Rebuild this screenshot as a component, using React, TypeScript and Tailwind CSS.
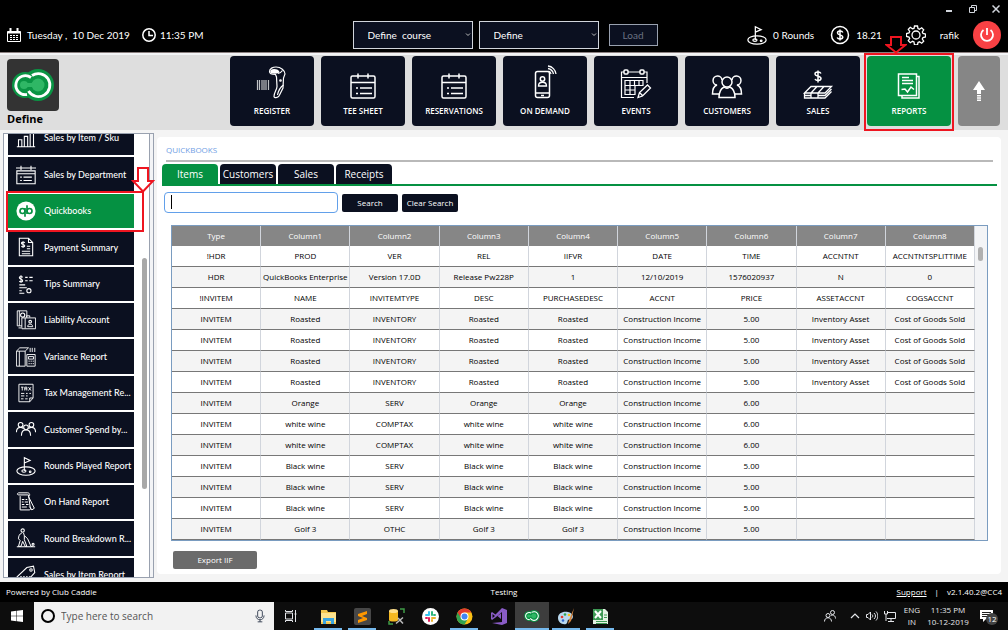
import type { ReactNode } from "react";
import clsx from "clsx";

const Svg = ({ className, box = 24, width = 1.5, children }: { className: string; box?: number; width?: number; children: ReactNode }) => (
  <svg
    className={clsx("shrink-0", className)}
    viewBox={`0 0 ${box} ${box}`}
    fill="none"
    stroke="currentColor"
    strokeWidth={width}
    aria-hidden="true"
  >
    {children}
  </svg>
);

const ClubLogo = ({ className }: { className: string }) => (
  <svg className={clsx("shrink-0", className)} viewBox="0 0 42 32" fill="none" aria-hidden="true">
    <circle cx="13" cy="16" r="13" fill="#0a9444" />
    <circle cx="26" cy="16" r="16" fill="#0a9444" />
    <circle cx="12" cy="16" r="4" fill="#2fb765" />
    <circle cx="26" cy="16" r="6.5" fill="#2fb765" />
    <path d="M12 14h10v4H12z" fill="#2fb765" />
    <path d="M19 8.500A9.500 9.500 0 1 0 15 25.500" stroke="#fff" strokeWidth="2.800" />
    <path d="M20 6.500A11.500 11.500 0 1 1 16.500 22" stroke="#fff" strokeWidth="2.800" />
  </svg>
);

const calendarList = (
  <>
    <rect x="4" y="8" width="24" height="22" rx="1.500" />
    <path d="M4 14.500h24M11 5.500v5M21 5.500v5M13 20h12M13 25.500h12M9 20h2M9 25.500h2" />
  </>
);

const navItems = [
  {
    label: "REGISTER",
    icon: (
      <>
        <path d="M1.500 12v10M3.500 12v10M6 12v10M8 12v10M10 12v10M12.500 12v10" strokeWidth="1.200" opacity=".75" />
        <path d="M13.500 3.500C13.500.5 17-1 20-1c5 0 9 3.500 9 7l-1.500 4-.5 10-4 8c-1 2-5 2-5 .5 0-4 3-7 3-10L20.500 9l-1-2.500c-3 0-6-.5-6-3z" strokeWidth="1.200" />
        <path d="M15 3.500c0-2.500 6-2.500 7.500 0 0 2-7.500 2-7.500 0z" fill="currentColor" />
        <path d="M22 5.500c2-.5 3.500-1.500 4.500-3M27.500 17c-3 2-5 5-6 10" strokeWidth="1.200" />
        <circle cx="24.500" cy="12.500" r=".6" />
      </>
    ),
  },
  { label: "TEE SHEET", icon: calendarList },
  { label: "RESERVATIONS", icon: calendarList },
  {
    label: "ON DEMAND",
    icon: (
      <>
        <rect x="6.500" y="3.500" width="14" height="26" rx="2" />
        <path d="M6.500 25h14M12 27.500h3M9.500 18c0-5 8-5 8 0zM19.500 3a4 4 0 0 1 2.500 3M19 .5a7 7 0 0 1 5.500 5.500M19-2a9 9 0 0 1 8 8" strokeWidth="1.300" />
        <circle cx="13.500" cy="11" r="2.200" />
      </>
    ),
  },
  {
    label: "EVENTS",
    icon: (
      <>
        <path d="M4 4H1.500v25.500H14M8 4h12M24 4h3v11M1.500 9.500H27M5 12.500h18v5H5zM5 17.500h10v9H5zM5 22h10M10 12.500v14M14.500 12.500v5M19 12.500v5" strokeWidth="1.200" />
        <rect x="4" y="2" width="4" height="4" rx="1" />
        <rect x="20" y="2" width="4" height="4" rx="1" />
        <path d="M18 29.500l1.500-5 8-7.500 3 3-8 8zM19.500 24.500l3 3" strokeWidth="1.300" />
      </>
    ),
  },
  {
    label: "CUSTOMERS",
    icon: (
      <>
        <circle cx="16" cy="14" r="5" />
        <path d="M8 29.500c0-6 2-9 5-10.500 2 1.500 4 1.500 6 0 3 1.500 5 4.500 5 10.500z" />
        <path d="M11 12a4.500 4.500 0 1 0-5 5c-3 1-4.500 4-4.500 9H8M21 12a4.500 4.500 0 1 1 5 5c3 1 4.500 4 4.500 9H24" />
      </>
    ),
  },
  {
    label: "SALES",
    icon: (
      <>
        <path d="M19 5.500c-1-2-6-2-6 .5s6 2 6 4.500-5 2.500-6 .5M16 2.500v12" />
        <path d="M2.500 25L9 18.500h20.500L23 25zM2.500 25v5H23l6.500-6.500M2.500 27.500h6M16 27.500h7l6.500-6.500M9 25l6-6.500M16 25l6-6.500M9 25v5M16 25v5" strokeWidth="1.300" />
      </>
    ),
  },
  {
    label: "REPORTS",
    icon: (
      <>
        <path d="M5.500 6h18v21.500h-18zM23.500 8.500H26V30H9v-2.500" />
        <path d="M9 9.500h7M9 12.500h11M9 15.500h11M8.500 21.500l3.500-.5 2.500 3 3.500-5 3 2.500" />
      </>
    ),
  },
];

const golf = (
  <>
    <ellipse cx="12" cy="18" rx="11" ry="5" />
    <path d="M10 18V2l7 3.500-7 3" />
    <ellipse cx="9.500" cy="18" rx="2.500" ry="1.500" />
    <circle cx="17" cy="19" r="1" />
  </>
);

const reports = [
  { label: "Sales by Item / Sku", icon: <path d="M1 22.500h22M3 22V14h4v8M10 22V10h4v12M17 22V5h4v17" /> },
  {
    label: "Sales by Department",
    icon: <path d="M0 3.500h24M1 7h22v15.500H1zM1 10.500h22M6 1v5M18 1v5M9 14.500h10M9 18.500h10M5 14.500h2M5 18.500h2" />,
  },
  { label: "Quickbooks", icon: null },
  {
    label: "Payment Summary",
    icon: <path d="M4 1.500h11l5 5v16H4zM15 1.500v5h5M10.500 7c-1-1.500-4-1-4 .5s4 1.500 4 3-3 2-4 .5M8.500 5v8M13 11h4M13 14h4M7 17h10M7 20h10" />,
  },
  {
    label: "Tips Summary",
    icon: (
      <>
        <path d="M8 4C7 2.500 4 2.500 4 4.500S8 6 8 8s-3 2-4 .5M6 1.500v9M11 4h3M16 4h4M11 8h3M16 8h4M4 13h7M4 16.500h9M4 20h3M4 23h6" />
        <circle cx="15.500" cy="20" r="2.500" />
      </>
    ),
  },
  {
    label: "Liability Account",
    icon: (
      <>
        <path d="M7 19H1.500V1H13v8M4 1v18M3 21.500h3M7 9.500h16.500v13H7zM11 9.500V22M12.500 9V7h4v2M14 20c0-4 6-4 6 0z" strokeWidth="1.100" />
        <circle cx="8" cy="6" r="2.500" />
        <circle cx="17" cy="14" r="1.600" />
      </>
    ),
  },
  {
    label: "Variance Report",
    icon: <path d="M.5 5v18H11V5zM.5 5l4-4H15M4 5v18M11 5l4-4M13 9h10v14H13zM17 1v5M19.500 1v5M22.500 1v5M15 11.500h6v3h-6zM15 17h1.500M17.500 17H19M20 17h1.500M15 20h1.500M17.500 20H19M20 20h1.500" strokeWidth="1.100" />,
  },
  {
    label: "Tax Management Re...",
    icon: <path d="M3.500 1.500h17V18l-4 4.500h-13zM20.500 18h-4v4.500M6 5h3M7.500 5v4M10.500 9V5h2.500v4M10.500 7H13M15 5l3 4M18 5l-3 4M6 12.500h4M12 12.500h2M16 12.500h2M6 15.500h4M12 15.500h2M6 19h3M11 19h3" strokeWidth="1.100" />,
  },
  {
    label: "Customer Spend by...",
    icon: (
      <>
        <circle cx="5.500" cy="7" r="2.800" />
        <circle cx="18.500" cy="7" r="2.800" />
        <circle cx="12" cy="10" r="2.800" />
        <path d="M.5 16c0-4 2-6 5-6 1.500 0 2.500.5 3.500 1.500M23.500 16c0-4-2-6-5-6-1.500 0-2.500.5-3.500 1.500M6.500 20c0-5 2-7 5.500-7s5.500 2 5.500 7" />
      </>
    ),
  },
  { label: "Rounds Played Report", icon: golf },
  {
    label: "On Hand Report",
    icon: <path d="M5 5v16.500h11c2 0 2-2.500 1-3.500L15 3.500H3.500c-3 0-2-2.500 0-2.500H14c3 0 3 4 1 4.500l7 14-3 2-3-4M7 9h3M11.500 9h2M7 12h2M10.500 12h4M7 15h3M12 15h3M7 18h6" strokeWidth="1.200" />,
  },
  {
    label: "Round Breakdown R...",
    icon: (
      <>
        <circle cx="8" cy="3" r="2" />
        <path d="M7 6C4 7 3 10 3 13l2 2-2 7h3l2-6 3 6h2l-3-8V9l4 4 4 9h2M9 6l1 3M1 22.500h22" strokeWidth="1.200" />
        <circle cx="20.500" cy="19.500" r="1.200" />
      </>
    ),
  },
  {
    label: "Sales by Item Report",
    icon: (
      <>
        <path d="M1.500 14L13 3l8-1.500L22.500 9 12 21c-1 1.500-2.500 1.500-4 0l-6-5c-1-.5-1-1.500-.5-2z" />
        <circle cx="18" cy="6" r="1.500" />
        <path d="M5 15h2M8.500 15h2M12 15h2M15.500 15h2" strokeWidth="3" />
      </>
    ),
  },
];

const columns = ["Type", "Column1", "Column2", "Column3", "Column4", "Column5", "Column6", "Column7", "Column8"];

const stock = (name: string, kind: string, price: string, asset = "", cogs = "") => [
  "INVITEM", name, kind, name, name, "Construction Income", price, asset, cogs,
];

const rows = [
  ["!HDR", "PROD", "VER", "REL", "IIFVR", "DATE", "TIME", "ACCNTNT", "ACCNTNTSPLITTIME"],
  ["HDR", "QuickBooks Enterprise", "Version 17.0D", "Release Pw228P", "1", "12/10/2019", "1576020937", "N", "0"],
  ["!INVITEM", "NAME", "INVITEMTYPE", "DESC", "PURCHASEDESC", "ACCNT", "PRICE", "ASSETACCNT", "COGSACCNT"],
  stock("Roasted", "INVENTORY", "5.00", "Inventory Asset", "Cost of Goods Sold"),
  stock("Roasted", "INVENTORY", "5.00", "Inventory Asset", "Cost of Goods Sold"),
  stock("Roasted", "INVENTORY", "5.00", "Inventory Asset", "Cost of Goods Sold"),
  stock("Roasted", "INVENTORY", "5.00", "Inventory Asset", "Cost of Goods Sold"),
  stock("Orange", "SERV", "6.00"),
  stock("white wine", "COMPTAX", "6.00"),
  stock("white wine", "COMPTAX", "6.00"),
  stock("Black wine", "SERV", "5.00"),
  stock("Black wine", "SERV", "5.00"),
  stock("Black wine", "SERV", "5.00"),
  stock("Golf 3", "OTHC", "5.00"),
];

const HeaderSelect = ({ label, value }: { label: string; value: string }) => (
  <div className="relative">
    <select
      aria-label={label}
      className="block h-7 w-[120px] appearance-none border border-gray-300 bg-[#0b1020] px-3.5 text-[10px] text-white"
    >
      <option>{value}</option>
    </select>
    <svg className="pointer-events-none absolute top-3 right-0.5 h-1 w-1.5" viewBox="0 0 6 4" fill="none" stroke="#bbb" aria-hidden="true">
      <path d="M1 .5l2 2 2-2" />
    </svg>
  </div>
);

const Header = () => (
  <header className="shrink-0 border-b border-[#8b8080] bg-black font-['Lato','Open_Sans',sans-serif] text-white">
    <div className="flex h-[18px] items-center justify-end gap-[15px] pr-2 text-gray-300">
      <button aria-label="Minimize">
        <Svg className="size-2" box={8} width={2}><path d="M0 6h6" /></Svg>
      </button>
      <button aria-label="Restore">
        <Svg className="size-2" box={8} width={1}><path d="M.5 2.500h5v5h-5zM2.500 2.500v-2h5v5h-2" /></Svg>
      </button>
      <button aria-label="Close">
        <Svg className="size-2" box={8} width={1.500}><path d="M.5.5l7 7M7.500.5l-7 7" /></Svg>
      </button>
    </div>
    <div className="grid h-[34px] grid-cols-[1fr_auto_1fr] items-center px-[7px] text-[10px]">
      <div className="flex items-center">
        <Svg className="size-3.5" box={14} width={1}>
          <path d="M.5 3.500h13v10H.5z" />
          <path d="M.5 4.500h13M3.500 0v4M10.500 0v4" strokeWidth="2" />
          <path d="M3 7.500h2M6 7.500h2M9 7.500h2M3 9.500h2M6 9.500h2M9 9.500h2M3 11.500h2M6 11.500h2M9 11.500h2" />
        </Svg>
        <span className="ml-1.5 whitespace-pre">Tuesday ,  10 Dec 2019</span>
        <Svg className="ml-3 size-3.5" box={14}>
          <circle cx="7" cy="7" r="6.200" />
          <path d="M7 3v4.500h4" />
        </Svg>
        <span className="ml-1">11:35 PM</span>
      </div>
      <div className="flex items-center gap-1.5 pl-0.5">
        <HeaderSelect label="Course" value={"Define\u00a0 course"} />
        <HeaderSelect label="Tee" value="Define" />
        <button className="ml-1 h-[22px] w-[49px] border border-gray-400 bg-[#0b1020] text-gray-500">Load</button>
      </div>
      <div className="flex items-center justify-end">
        <Svg className="size-5">{golf}</Svg>
        <span className="ml-1.5">0 Rounds</span>
        <Svg className="ml-4 size-5" box={20}>
          <circle cx="10" cy="10" r="8.500" />
          <path d="M12.800 7.500C12 5.500 7.500 5.500 7.500 8s5.300 1.500 5.300 4-4.800 2.500-5.600.5M10 4.500v11" />
        </Svg>
        <span className="ml-1.5">18.21</span>
        <button aria-label="Settings" className="ml-6">
          <Svg className="size-5" box={20} width={1.300}>
            <path d="M8.500 1h3l.5 2.500 1.500.7 2.200-1.400 2 2-1.400 2.200.7 1.500 2.500.5v3l-2.500.5-.7 1.500 1.400 2.200-2 2-2.200-1.400-1.500.7-.5 2.500h-3L8 17l-1.500-.7-2.200 1.400-2-2 1.400-2.200L3 12l-2.500-.5v-3L3 8l.7-1.500-1.400-2.200 2-2 2.200 1.400L8 3.500z" />
            <circle cx="10" cy="10" r="4" />
          </Svg>
        </button>
        <span className="ml-3.5">rafik</span>
        <button aria-label="Log out" className="ml-3.5 flex size-7 items-center justify-center rounded-full bg-[#f94144]">
          <Svg className="size-4" box={16} width={1.800}>
            <path d="M8 1v7M4.500 3a6 6 0 1 0 7 0" />
          </Svg>
        </button>
      </div>
    </div>
  </header>
);

const Nav = () => (
  <nav className="flex shrink-0 items-start justify-between border-t-2 border-gray-100 bg-[#dedede] pt-px pr-2 pb-[3px] pl-[7px]">
    <div className="pt-[3px]">
      <div className="flex size-[52px] items-center justify-center rounded-sm bg-[#333]">
        <ClubLogo className="h-8 w-[42px]" />
      </div>
      <p className="text-[11px] leading-4 font-bold text-black">Define</p>
    </div>
    <div className="flex gap-[7px]">
      {navItems.map((item) => {
        const active = item.label === "REPORTS";
        return (
          <button
            key={item.label}
            className={clsx(
              "relative flex h-[70px] w-[84px] flex-col items-center gap-1 rounded pt-3 text-[8px] leading-[14px] font-semibold text-white",
              active ? "bg-[#059142]" : "bg-[#0b1020]"
            )}
          >
            <Svg className="size-8 overflow-visible" box={32}>{item.icon}</Svg>
            {item.label}
            {active && (
              <>
                <span className="absolute -inset-[3px] bottom-[-5px] z-10 border-2 border-[#ee1520]" />
                <svg className="absolute -top-5 left-[18px] z-10 h-[18px] w-[22px]" viewBox="0 0 22 18" fill="none" stroke="#ee1520" strokeWidth="2" aria-hidden="true">
                  <path d="M6 1h10v8h4.500L11 16.500 1.500 9H6z" />
                </svg>
              </>
            )}
          </button>
        );
      })}
      <button aria-label="Scroll up" className="flex h-[70px] w-[42px] items-center justify-center rounded bg-[#868686] text-white">
        <svg className="h-5 w-3" viewBox="0 0 12 20" fill="currentColor" aria-hidden="true">
          <path d="M6 0l6 9H8v4H4V9H0zM4 14h4v1.500H4zM4 16.200h4v1.500H4zM4 18.400h4v1.500H4z" />
        </svg>
      </button>
    </div>
  </nav>
);

const Sidebar = () => (
  <aside className="relative mt-[3px] mb-1 ml-[3px] flex w-[151px] shrink-0 border border-gray-400 bg-white">
    <div className="flex flex-1 overflow-hidden pr-0.5 pl-1">
      <ul className="-mt-[13px] flex h-[471px] w-[126px] shrink-0 flex-col gap-0.5">
        {reports.map((report) => (
          <li key={report.label} className="flex flex-1">
            <button
              className={clsx(
                "flex w-full items-center gap-2 pl-2 text-left font-['Lato','Open_Sans',sans-serif] text-[9px] font-medium whitespace-nowrap text-white",
                report.icon ? "bg-[#0b1020]" : "bg-[#059142]"
              )}
            >
              {report.icon ? (
                <Svg className="size-5" width={1.300}>{report.icon}</Svg>
              ) : (
                <Svg className="size-5" width={2}>
                  <circle cx="12" cy="12" r="11.500" fill="#fff" stroke="none" />
                  <g stroke="#059142">
                    <circle cx="7.800" cy="12" r="3" />
                    <circle cx="16.200" cy="12" r="3" />
                    <path d="M10.800 8.500V19M13.200 5v10.500" />
                  </g>
                </Svg>
              )}
              {report.label}
            </button>
          </li>
        ))}
      </ul>
      <div className="flex flex-1 flex-col pt-[124px]">
        <div className="ml-auto h-[231px] w-[5px] rounded-full bg-[#a8a8a8]" />
      </div>
    </div>
    <div className="w-1 border-l border-gray-400 bg-gray-100" />
    <span className="absolute top-[57px] left-0.5 h-[41px] w-[138px] border-2 border-[#ee1520]" />
    <svg className="absolute top-[33px] -right-0.5 h-[26px] w-6" viewBox="0 0 24 26" fill="#fff" stroke="#ee1520" strokeWidth="2" aria-hidden="true">
      <path d="M7 1h10v13h5L12 24.500 2 14h5z" />
    </svg>
  </aside>
);

const darkButton = "h-[18px] w-14 rounded-xs bg-[#0b1020] text-[8px] text-white";

const QuickbooksPanel = () => (
  <main className="mt-[7px] mr-[7px] mb-2 ml-[3px] min-w-0 flex-1 rounded bg-white pr-1 pl-[5px]">
    <h1 className="mr-1 ml-1 border-b-2 border-[#b9b9b9] pt-[7px] pb-1 text-[8px] leading-3 text-[#6f9ee4]">QUICKBOOKS</h1>
    <div role="tablist" className="mt-0.5 flex gap-0.5 border-b-2 border-[#059142]">
      {["Items", "Customers", "Sales", "Receipts"].map((tab) => (
        <button
          key={tab}
          role="tab"
          aria-selected={tab === "Items"}
          className={clsx(
            "h-5 w-14 rounded-t text-[10px] whitespace-nowrap text-white",
            tab === "Items" ? "bg-[#059142]" : "bg-[#0b1020]"
          )}
        >
          {tab}
        </button>
      ))}
    </div>
    <form className="mt-1.5 ml-0.5 flex items-center gap-1" onSubmit={(e) => e.preventDefault()}>
      <div className="relative">
        <input
          aria-label="Search items"
          className="block h-[21px] w-[174px] rounded-sm border border-[#62a0ea] px-1.5 text-[10px] text-black outline-none"
        />
        <span className="pointer-events-none absolute top-[3px] left-[7px] h-3.5 w-px bg-black" />
      </div>
      <button className={darkButton}>Search</button>
      <button type="button" className={clsx(darkButton, "whitespace-nowrap")}>Clear Search</button>
    </form>
    <div className="mt-3 mr-[9px] ml-[9px] flex border border-[#7a9cc0] bg-gray-100">
      <div className="min-w-0 flex-1">
        <table className="w-full table-fixed border-separate border-spacing-0 text-center text-[8px] leading-none whitespace-nowrap text-black">
          <thead>
            <tr className="h-5 bg-[#868686] text-white">
              {columns.map((col) => (
                <th key={col} className="border-r border-gray-300 p-0 font-medium">{col}</th>
              ))}
            </tr>
          </thead>
          <tbody>
            {rows.map((row, r) => (
              <tr key={r} className="h-[21px] odd:bg-white even:bg-[#f4f4f4]">
                {row.map((cell, c) => (
                  <td key={c} className="border-r border-b border-r-gray-300 border-b-[#777] p-0">{cell}</td>
                ))}
              </tr>
            ))}
          </tbody>
        </table>
      </div>
      <div className="w-3 px-[3px] pt-[21px]">
        <div className="h-3.5 w-[5px] rounded-full bg-[#b0b0b0]" />
      </div>
    </div>
    <button className="mt-2.5 ml-[11px] block h-[18px] w-[84px] rounded-xs bg-[#6b6b6b] text-[8px] text-white">Export IIF</button>
  </main>
);

const apps = [
  {
    name: "File Explorer",
    open: true,
    icon: (
      <>
        <path d="M1 2h6l1 2h8v12H1z" fill="#f3c64f" />
        <path d="M1 5h15v9H1z" fill="#fde28d" />
        <path d="M3 10h11v6h-3v-3H6v3H3z" fill="#3aa5e0" />
      </>
    ),
  },
  {
    name: "Sublime Text",
    open: true,
    icon: (
      <>
        <rect width="17" height="17" rx="2" fill="#474747" />
        <path d="M4 6l9-3v3L8 8l5 2v2l-9 3v-3l5-2-5-2z" fill="#ff9800" />
      </>
    ),
  },
  {
    name: "SQL Tools",
    icon: (
      <>
        <path d="M1 3v9c0 2 9 2 9 0V3z" fill="#f5b921" />
        <ellipse cx="5.500" cy="3" rx="4.500" ry="2" fill="#ffe08a" />
        <path d="M12 1h4v4M1 13v3h4" stroke="#3f9b47" strokeWidth="1.500" fill="none" />
        <path d="M8 15.500l7-6M10 10l5 5.500" stroke="#bbb" strokeWidth="1.500" />
      </>
    ),
  },
  {
    name: "Slack",
    icon: (
      <>
        <circle cx="8.500" cy="8.500" r="8.500" fill="#fff" />
        <g strokeWidth="2" strokeLinecap="round">
          <path d="M7 4v3M4 7h3" stroke="#36c5f0" />
          <path d="M10 4v3M13 7h-1" stroke="#2eb67d" />
          <path d="M10 10h3M10 13v-1" stroke="#ecb22e" />
          <path d="M7 10v3M4 10h1" stroke="#e01e5a" />
        </g>
      </>
    ),
  },
  {
    name: "Chrome",
    open: true,
    icon: (
      <>
        <circle cx="8.500" cy="8.500" r="8" fill="#fbc116" />
        <path d="M8.500 8.500L1.600 4.500A8 8 0 0 0 8.500 16.500l3-5z" fill="#31a350" />
        <path d="M1.600 4.500A8 8 0 0 1 15.400 4.500H8.500L5 10z" fill="#e33b2e" />
        <circle cx="8.500" cy="8.500" r="4" fill="#fff" />
        <circle cx="8.500" cy="8.500" r="3" fill="#4285f4" />
      </>
    ),
  },
  {
    name: "Visual Studio",
    icon: <path d="M12 0l5 2v13l-5 2-10-2 10-1V4L5.500 9.500 2 12l-1-1V5l1-1 3.500 2.500zM2.500 6v4L5 8zM11 5.500L7.500 8l3.500 3z" fill="#8a5cc7" fillRule="evenodd" />,
  },
  { name: "Club Caddie", open: true, active: true, icon: null },
  {
    name: "Paint",
    open: true,
    icon: (
      <>
        <path d="M0 10c0-5 5-7 10-6 5 1 6 5 4 7-1 1-3 0-4 1s0 3-2 4c-4 1-8-2-8-6z" fill="#b9d8ee" />
        <circle cx="4" cy="9" r="1.300" fill="#e33b2e" />
        <circle cx="7" cy="6.500" r="1.300" fill="#31a350" />
        <circle cx="11" cy="7" r="1.300" fill="#fbc116" />
        <circle cx="5" cy="12.500" r="1.300" fill="#3267c9" />
        <path d="M16 0l-5 12-1 4 3-3z" fill="#d6843c" />
      </>
    ),
  },
  {
    name: "Excel",
    open: true,
    icon: (
      <>
        <path d="M1 1h12l3 3v12H1z" fill="#e4f2e4" />
        <path d="M1 1h10v11H1z" fill="#3e9a55" />
        <path d="M3 3l6 7M9 3l-6 7" stroke="#fff" strokeWidth="2" />
        <path d="M4 13.500h11M4 15.500h11M12 7h3M12 9.500h3" stroke="#3e9a55" />
      </>
    ),
  },
];

const Taskbar = () => (
  <footer className="shrink-0">
    <div className="grid h-5 grid-cols-3 items-center bg-black pr-1.5 pl-1.5 text-[8px] text-white">
      <span>Powered by Club Caddie</span>
      <span className="text-center">Testing</span>
      <span className="flex justify-end gap-2">
        <a href="#support" className="underline">Support</a>
        <span>|</span>
        <span>v2.1.40.2@CC4</span>
      </span>
    </div>
    <div className="flex h-7 bg-[#0d0d0d] text-gray-200">
      <button aria-label="Start" className="flex w-[34px] items-center justify-center">
        <svg className="size-3" viewBox="0 0 12 12" fill="#fff" aria-hidden="true">
          <path d="M0 1.500L5.500.8v4.900H0zM6 .7L12 0v5.700H6zM0 6.300h5.500v4.900L0 10.500zM6 6.300h6V12l-6-.7z" />
        </svg>
      </button>
      <label className="flex w-60 items-center gap-1.5 bg-[#f2f2f2] px-[7px] text-gray-700">
        <span className="size-3.5 shrink-0 rounded-full border-2 border-black" />
        <input aria-label="Type here to search" placeholder="Type here to search" className="min-w-0 flex-1 text-[10px] outline-none placeholder:text-[#555]" />
        <Svg className="size-3.5" width={1.600}>
          <rect x="8" y="2" width="8" height="13" rx="3" />
          <path d="M5 11c0 10 14 10 14 0M12 18v4M8 22h8" />
        </Svg>
      </label>
      <button aria-label="Task view" className="mr-[3px] flex w-[34px] items-center justify-center">
        <Svg className="size-3" box={12} width={1}>
          <path d="M.5 3h7v6h-7zM.5 0v1.500h7V0M.5 12v-1.500h7V12M10.500 0v12M9.500 4h2" />
        </Svg>
      </button>
      {apps.map((app) => (
        <button
          key={app.name}
          aria-label={app.name}
          className={clsx("relative flex w-[34px] items-center justify-center", app.active && "bg-[#3d3d3d]")}
        >
          {app.icon ? (
            <svg className="size-[17px]" viewBox="0 0 17 17" aria-hidden="true">{app.icon}</svg>
          ) : (
            <ClubLogo className="h-3 w-4" />
          )}
          {app.open && <span className={clsx("absolute bottom-0 h-0.5 bg-[#76b9ed]", app.active ? "w-full" : "w-7")} />}
        </button>
      ))}
      <div className="ml-auto flex items-center pr-3.5 text-[8px] leading-3">
        <Svg className="size-3" box={12} width={1}>
          <circle cx="4" cy="5.500" r="2" />
          <circle cx="8.500" cy="2.500" r="2" />
          <path d="M.5 11.500c0-5 7-5 7 0M7 5.500c2-1 4.500 0 4.500 3" />
        </Svg>
        <Svg className="ml-3.5 size-2.5" box={10} width={1.200}><path d="M1 7l4-4 4 4" /></Svg>
        <Svg className="ml-1.5 size-3" box={12} width={1}>
          <path d="M.5 4.500H2L4.500 2v8L2 7.500H.5zM6 4.500c1 1 1 2 0 3M8 3c2 2 2 4 0 6M10 1.500c2.500 3 2.500 6 0 9" />
        </Svg>
        <Svg className="ml-1.5 size-3" box={12} width={1}>
          <path d="M3 2.500h8.500v6H3M7 8.500V11M4 11.500h6M.5 1v3h3V1M2 4v7" />
        </Svg>
        <span className="ml-1 w-6 text-center">ENG IN</span>
        <span className="w-12 text-center">11:35 PM 10-12-2019</span>
        <span className="relative ml-2">
          <svg className="h-3.5 w-3.5" viewBox="0 0 14 14" aria-hidden="true">
            <path d="M0 1h13v9H6l-3 3v-3H0z" fill="#fff" />
            <path d="M2 3.500h9M2 5.500h9M2 7.500h9" stroke="#222" />
          </svg>
          <span className="absolute top-1 left-1.5 flex size-3 items-center justify-center rounded-full bg-[#444] text-[8px] text-white">12</span>
        </span>
      </div>
    </div>
  </footer>
);

export default function App() {
  return (
    <div className="flex h-screen flex-col bg-[#f4f4f4] font-['Open_Sans','Noto_Sans',sans-serif]">
      <Header />
      <Nav />
      <div className="flex min-h-0 flex-1">
        <Sidebar />
        <QuickbooksPanel />
      </div>
      <Taskbar />
    </div>
  );
}
